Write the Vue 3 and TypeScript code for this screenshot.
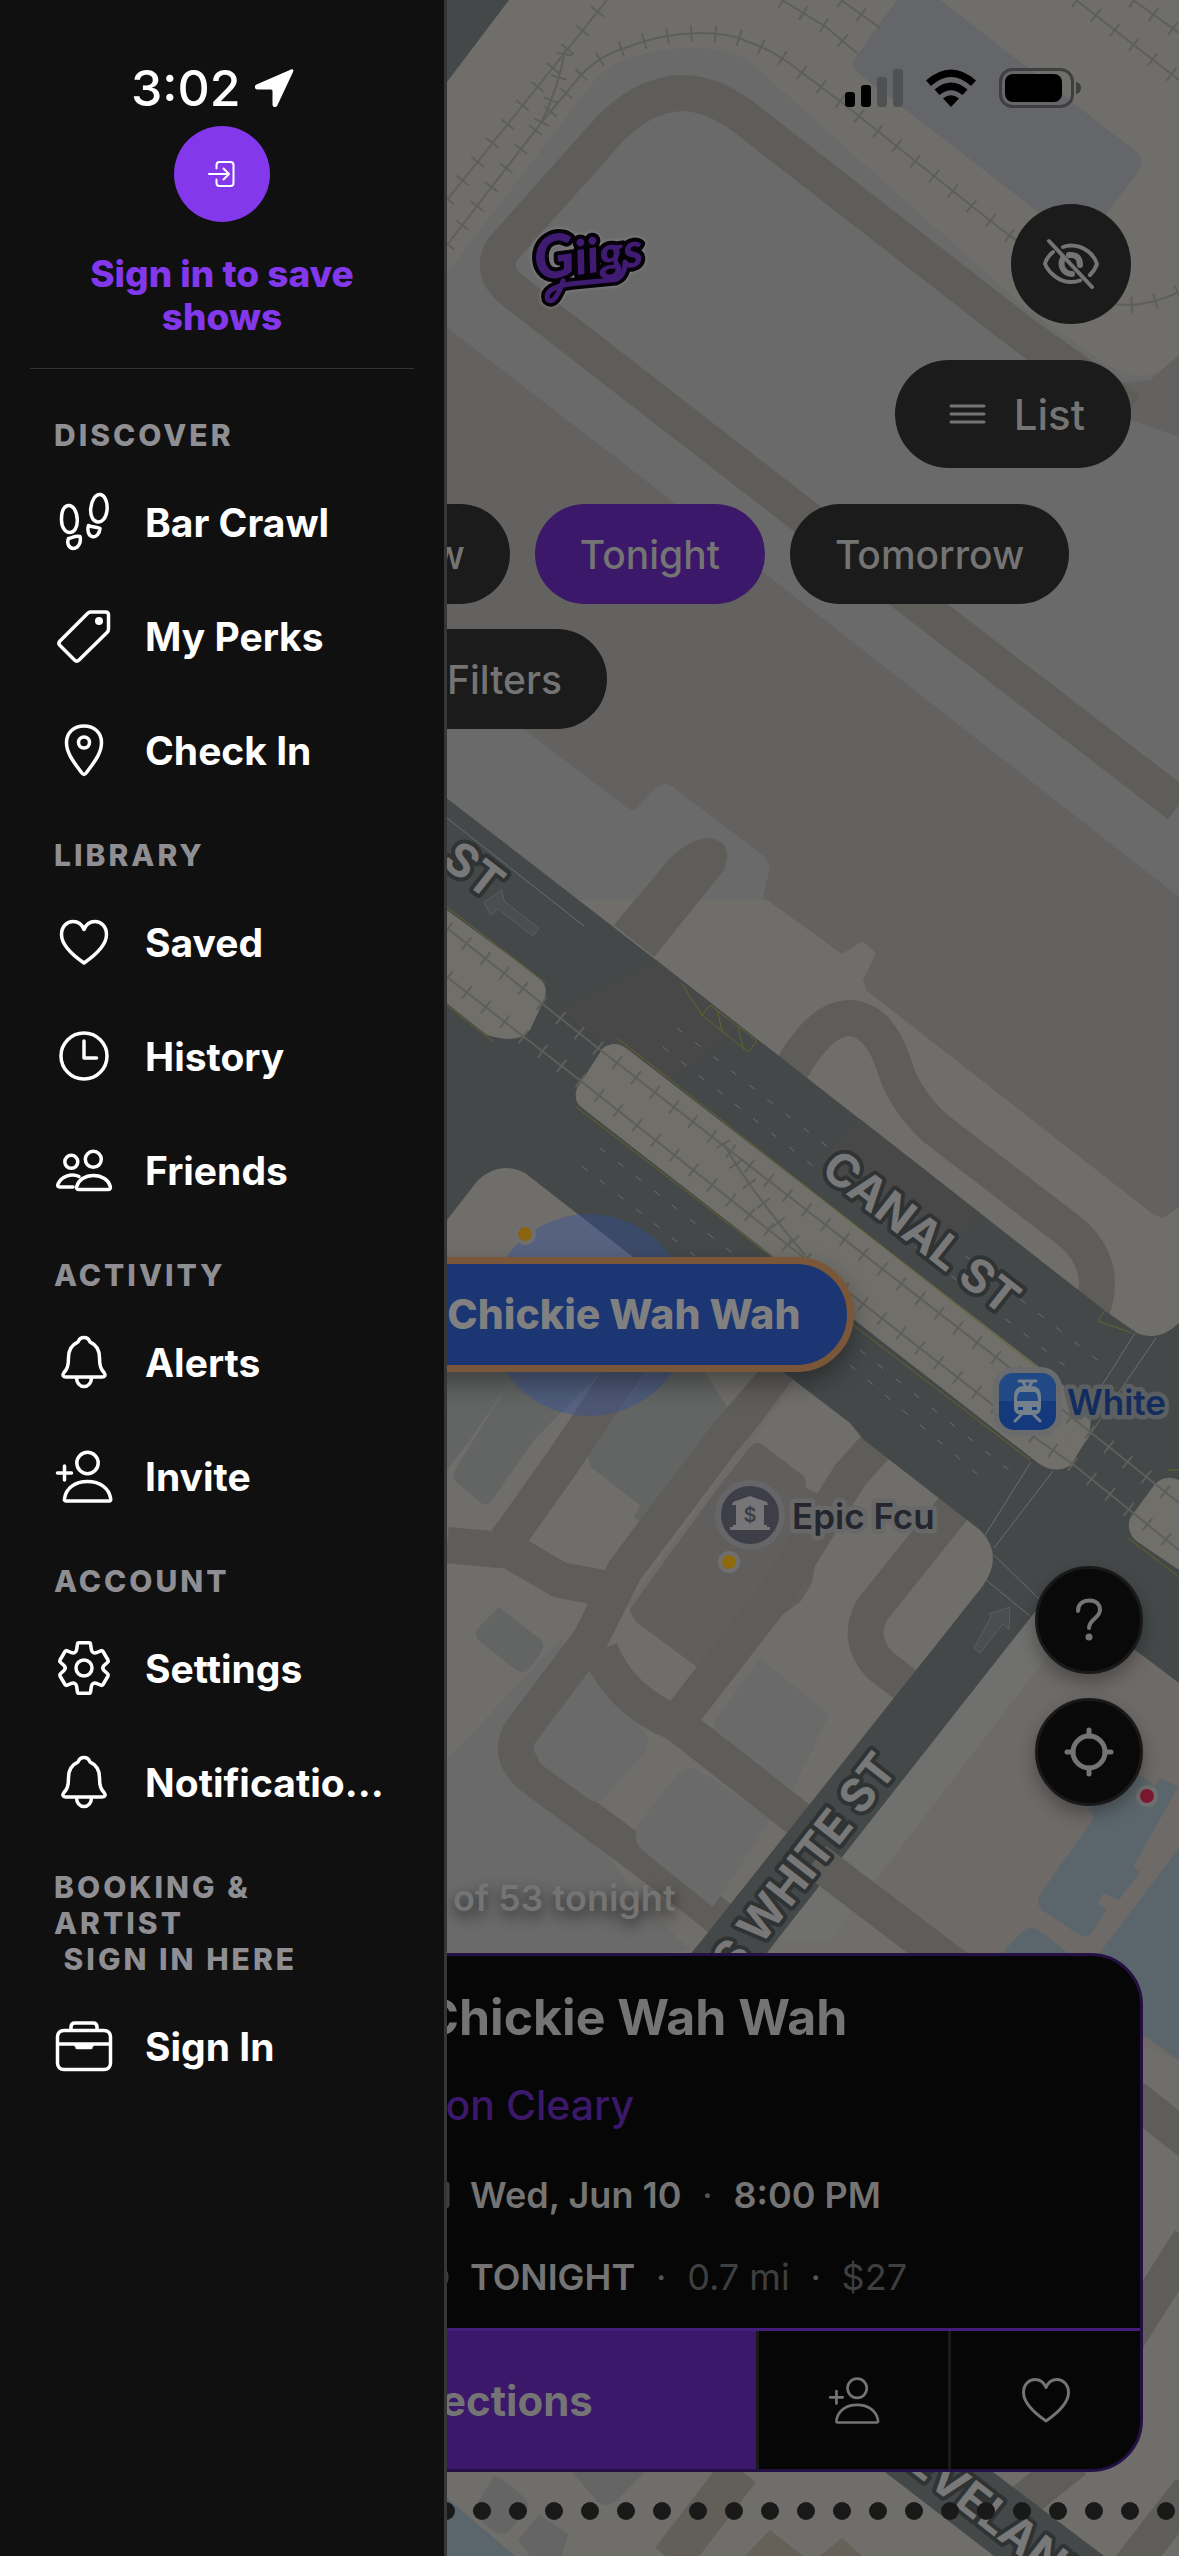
<script setup lang="ts">
interface Item {
  label: string
  icon: string
}
interface Section {
  title: string[]
  items: Item[]
}

const circle = (cx: number, cy: number, r: number): string =>
  `M${cx - r} ${cy}a${r} ${r} 0 1 0 ${2 * r} 0a${r} ${r} 0 1 0 ${-2 * r} 0z`

const bell =
  'M30 5.5c-3.5 0-5 2-5.800 4.300C17 13 14.500 18 14.500 25.500c0 9-1.500 11.500-4.500 15-2 2.500-1 4.500 1.500 4.500h37c2.500 0 3.500-2 1.500-4.500-3-3.500-4.500-6-4.500-15 0-7.500-2.500-12.500-9.700-15.700C35 7.500 33.500 5.500 30 5.500zM22.500 45.500c0 5.500 3.500 9 7.500 9s7.500-3.500 7.500-9'
const heart =
  'M30 51C17 42 7.500 33 7.500 22.500 7.500 14.500 13 9.500 19 9.500c5 0 9 3 11 8 2-5 6-8 11-8 6 0 11.500 5 11.500 13C52.500 33 43 42 30 51z'
const invite =
  circle(33.5, 17, 10.7) +
  'M12 55h43c1.500 0 2-1 1.700-2.500C55 42 46 35.500 33.500 35.500S12 42 10.500 52.500C10.200 54 10.500 55 12 55zM3.500 27h14M10.500 20v14'

const icons: Record<string, string> = {
  steps:
    'M14 13.500c5-1 9 6 9.300 14.500.2 8-3.300 12.500-7.500 12.500S7.600 36 7.500 28c-.1-7.500 2-13.500 6.500-14.500zM46.500 2.500c-5-1-9 6-9.800 14-.7 8 2.800 13 7 13.500s8.300-3.500 9.300-11.500c.9-8-2-15-6.500-16zM14.500 46.500c4-.5 6-3 11.500-2 1.500 6-2 12-6.500 12s-7-5-5-10zM34.500 33.500c3.500 2 8 1 11.500 3-.5 5-3.500 8.500-7 8.200-4.500-.4-6-6.200-4.500-11.200z',
  tag: 'M37 6h14.500c2 0 3 1 3 3v14c0 1.500-.5 2.500-1.500 3.500L25 54c-1.500 1.500-3 1.500-4.500 0L6 39.500C4.500 38 4.500 36.500 6 35L34 7c1-.8 2-1 3-1z',
  pin: 'M30 54.500c-1.500 0-2.500-2-4-4C18 40 12.500 32 12.500 22.500 12.500 12.500 20 6 30 6s17.500 6.500 17.500 16.500C47.500 32 42 40 34 50.500c-1.500 2-2.500 4-4 4z' + circle(30, 22.5, 5.5),
  heart,
  clock: circle(30, 30, 23) + 'M30 15v17h12.500',
  friends:
    circle(39.3, 19.3, 8) +
    circle(17.3, 21.8, 6.5) +
    'M25 49.500h29c2 0 2.800-1.200 2.300-3C54.500 40 48 35.500 39.500 35.500S24.500 40 22.700 46.500c-.5 1.800.3 3 2.300 3zM25 36.500C17 32.500 7 37 4 44c-.8 1.800 0 3 1.500 3H19',
  bell,
  invite,
  gear:
    'M25 4.700h10c1 0 1.500.5 1.600 1.500l.7 5c.4 3.300 2.700 4.300 5.500 3.300l4-1.700c1-.4 1.600-.2 2.200.7l5 8.500c.5 1 .4 1.500-.4 2.200L50 27.500c-1.700 1.700-1.700 3.300 0 5l3.600 3.300c.8.7.9 1.200.4 2.200l-5 8.500c-.6.9-1.200 1.100-2.200.7l-4-1.700c-2.800-1-5.100 0-5.500 3.300l-.7 5c-.1 1-.6 1.500-1.600 1.500H25c-1 0-1.500-.5-1.600-1.500l-.7-5c-.4-3.300-2.700-4.300-5.500-3.300l-4 1.700c-1 .4-1.600.2-2.200-.7l-5-8.500c-.5-1-.4-1.500.4-2.200l3.600-3.300c1.700-1.700 1.700-3.300 0-5l-3.600-3.300c-.8-.7-.9-1.200-.4-2.200l5-8.500c.6-.9 1.200-1.100 2.200-.7l4 1.700c2.800 1 5.100 0 5.500-3.300l.7-5c.1-1 .6-1.500 1.600-1.500z' +
    circle(30, 30, 8),
  briefcase:
    'M10 14.500h40c4 0 6.500 2.500 6.500 6.500v26c0 4-2.500 6.500-6.500 6.500H10c-4 0-6.500-2.500-6.500-6.500V21c0-4 2.500-6.500 6.500-6.500zM17 14v-3c0-2.500 1.500-4 4-4h18c2.500 0 4 1.500 4 4v3M3.500 28h53M22 29.500h16M23 31.500h14'
}

const sections: Section[] = [
  {
    title: ['Discover'],
    items: [
      { label: 'Bar Crawl', icon: 'steps' },
      { label: 'My Perks', icon: 'tag' },
      { label: 'Check In', icon: 'pin' }
    ]
  },
  {
    title: ['Library'],
    items: [
      { label: 'Saved', icon: 'heart' },
      { label: 'History', icon: 'clock' },
      { label: 'Friends', icon: 'friends' }
    ]
  },
  {
    title: ['Activity'],
    items: [
      { label: 'Alerts', icon: 'bell' },
      { label: 'Invite', icon: 'invite' }
    ]
  },
  {
    title: ['Account'],
    items: [
      { label: 'Settings', icon: 'gear' },
      { label: 'Notifications', icon: 'bell' }
    ]
  },
  {
    title: ['Booking & Artist', '\u00a0Sign in here'],
    items: [{ label: 'Sign In', icon: 'briefcase' }]
  }
]

const rails: string[] = [
  'M447 245L541 123L581 75Q600 55 628 47Q660 34 698 33Q730 33 746 41Q768 48 789 63L845 105L998 227L1034 253L1080 290Q1100 305 1130 305Q1155 304 1179 292',
  'M447 200L607 0',
  'M541 123Q558 90 565 50',
  'M782 0L826 27L857 53',
  'M841 0L880 28',
  'M1076 0L1179 80',
  'M1133 0L1179 33',
  'M447 928L603 1052L1010 1368L1104 1443L1179 1503',
  'M447 977L577 1078L803 1257L1034 1437L1074 1465L1179 1550',
  'M723 1143Q750 1190 805 1255'
]

const lanes: string[] = [
  'M1179 805L757 480L512 290Q490 272 502 250L600 140Q640 92 686 93Q715 95 745 118L1024 335L1130 410',
  'M791 1070Q820 1018 850 1018Q880 1020 895 1068Q905 1100 935 1128L1072 1233Q1108 1265 1092 1310',
  'M645 1340L564 1460L500 1550L447 1545',
  'M500 1545L560 1580L614 1590',
  'M800 1350L723 1440L625 1570L590 1640L520 1733Q508 1755 530 1775L676 1883L740 1935',
  'M600 1650Q620 1700 676 1723L800 1820',
  'M676 1723L779 1590L850 1475L900 1420',
  'M960 1500L872 1610Q856 1640 880 1665L925 1700',
  'M815 1860L960 1970',
  'M1190 2240L1120 2350',
  'M1075 2460L1000 2520',
  'M1190 2490L1120 2580'
]

const dotCount = 33
</script>

<template>
  <div class="screen">
    <svg class="map" viewBox="0 0 1179 2556" preserveAspectRatio="xMidYMin slice" aria-hidden="true">
      <rect width="1179" height="2556" fill="#6f6e6b" />
      <!-- upper block -->
      <path d="M440 0H509L447 82L440 90z" fill="#444848" />
      <path d="M447 273L595 80Q615 60 640 55Q690 42 732 53Q750 60 770 80L1024 307L1100 360Q1150 395 1179 353V900H440V280z" fill="#6a6a6a" />
      <path d="M440 322L671 500L1179 897V1207L1163 1218L1154 1215L866 990L863 980L876 953L862 941L842 954L763 897L770 867L765 857L673 787L665 783L657 787L634 811L626 807L525 730L440 665z" fill="#646260" />
      <path d="M1100 385L1150 380L1179 355V437L1131 420z" fill="#636260" />
      <path d="M897 0H940L1138 153Q1144 162 1138 172L1109 210L1088 238Q1081 244 1072 238L857 72Q850 66 855 58z" fill="#64666a" />
      <!-- lower left block -->
      <g fill="#6a6a6a">
        <path d="M447 1760L560 1640L600 1670L640 1720L560 1790L640 1900L690 1950L600 1960H447z" />
        <path d="M760 1658L829 1715L791 1793L722 1742Q712 1734 716 1720z" />
      </g>
      <g fill="#626564">
        <path d="M447 1365H608L534 1440L492 1500Q486 1508 480 1502L456 1482Q451 1476 456 1468L511 1380L470 1440L447 1470z" />
        <path d="M652 1365H700L727 1407L709 1440L643 1523L634 1517L640 1505L592 1468Q586 1462 590 1452z" />
        <path d="M499 1607L541 1640Q546 1646 540 1654L528 1670Q522 1675 515 1669L478 1640Q474 1634 478 1628z" />
      </g>
      <path d="M760 1443L805 1477L806 1488L826 1497L812 1583L800 1602L704 1672L640 1625Q625 1612 632 1600L748 1449Q755 1441 760 1443z" fill="#615f5d" />
      <g fill="none" stroke="#5f5d5a" stroke-width="36" stroke-linejoin="round">
        <path v-for="d in lanes" :key="d" :d="d" />
      </g>
      <path d="M591 1695Q600 1695 643 1730Q652 1740 645 1752L604 1798Q598 1804 590 1800L542 1765Q534 1756 540 1746L580 1700Q586 1694 591 1695z" fill="#6a6a6a" />
      <path d="M690 1768Q700 1768 770 1820L713 1907L642 1850Q632 1840 638 1825L676 1776Q682 1768 690 1768z" fill="#6a6a6a" />
      <path d="M629 1607L750 1440L795 1380" fill="none" stroke="#6c6b69" stroke-width="4" />
      <path d="M614 925L671 857Q692 838 709 838Q735 842 724 870L654 957z" fill="#5f5d5a" />
      <!-- Canal and White streets -->
      <path d="M440 793L656 960L1104 1310L1137 1333Q1158 1343 1179 1323V1683L1135 1650L1070 1600Q1050 1590 1035 1612L777 1940L700 2040H620L702 1940L982 1587Q1005 1555 980 1530L864 1440L850 1423L633 1257L525 1173Q500 1160 478 1180L440 1229z" fill="#444848" />
      <path d="M656 960L740 1026L660 1090L560 1010zM860 1119L980 1213L940 1260L820 1160z" fill="#484849" />
      <g fill="#706f6a">
        <path d="M440 905L515 960L541 980Q549 988 544 1000L530 1030Q518 1045 487 1035L440 998z" />
        <path d="M603 1048Q614 1040 626 1048L1043 1370L1080 1398Q1096 1410 1088 1437L1071 1465Q1055 1475 1038 1463L581 1107Q573 1100 577 1088z" />
        <path d="M1179 1480Q1165 1474 1155 1484L1130 1518Q1126 1530 1135 1540L1179 1570z" />
      </g>
      <g fill="none" stroke="#65642a" stroke-width="1">
        <path d="M440 902L546 983M617 1038L1040 1370M440 1000L494 1042M575 1106L772 1257M853 1325L1030 1460M1179 1470L1168 1470M1128 1538L1179 1577M682 984L702 1015L748 1052L757 1041L710 1005L702 1015M718 1012L722 1032M738 1028L744 1050M1105 1310L1098 1321L1132 1333" />
      </g>
      <g fill="none" stroke="#6a6d6d" stroke-width="1">
        <path d="M677 1028L1110 1370M663 1047L1070 1370M600 1148L760 1275M582 1166L700 1260M860 1350L1015 1475M850 1365L990 1485" stroke-dasharray="7 16" />
        <path d="M447 818L584 926M1135 1333L1065 1444M1156 1338L1085 1442M1031 1462L982 1540M1053 1471L994 1548M994 1555L1040 1600M986 1580L1030 1616" />
      </g>
      <g fill="none" stroke="#5e5e5c" stroke-width="2">
        <path v-for="d in rails" :key="d" :d="d" />
      </g>
      <g fill="none" stroke="#5e5e5c" stroke-width="16" stroke-dasharray="2 22">
        <path v-for="d in rails" :key="d" :d="d" />
      </g>
      <g fill="#4a4e4e" stroke="#5a5e5e">
        <path d="M484 902L502 890L504 901L539 928L533 936L498 909L491 915z" />
        <path d="M974 1648L991 1617L989 1614L1010 1607L1009 1630L1003 1624L980 1653z" />
      </g>
      <!-- lower right block -->
      <path d="M1035 1612Q1060 1595 1100 1625L1179 1685V2060L960 1970L830 1900z" fill="#6d6a68" />
      <path d="M1035 1612L777 1940L830 1940L1060 1640z" fill="#70706e" />
      <g fill="#5b666c">
        <path d="M1137 1773L1155 1786L1161 1778L1178 1787L1133 1867L1140 1872L1119 1900L1104 1893L1097 1903L1107 1910L1092 1932Q1086 1940 1078 1934L1042 1910Q1035 1903 1041 1893L1095 1817L1088 1810z" />
        <path d="M1179 1848L1098 1955L1142 2034L1179 2060z" />
        <path d="M1002 1953L1024 1930Q1030 1925 1038 1930L1068 1953z" />
        <path d="M447 2498L515 2556H447z" />
      </g>
      <path d="M815 1860L960 1970M1130 2095L1200 2150" stroke="#5f5d5a" stroke-width="36" />
      <!-- below the card -->
      <g fill="#656565">
        <path d="M494 2476Q500 2476 527 2500Q530 2508 524 2514L508 2532Q500 2536 492 2530L472 2512z" />
        <path d="M539 2514L568 2534L562 2556H530L518 2541z" />
        <path d="M572 2472H645L615 2502Q607 2508 598 2502z" />
      </g>
      <path d="M740 2470L671 2560" stroke="#625f59" stroke-width="40" />
      <path d="M770 2530L803 2556H745zM842 2538L862 2556H820z" fill="#656058" />
      <path d="M885 2472H993L1104 2556H994z" fill="#444848" />
      <g class="road" paint-order="stroke">
        <text transform="translate(440 864) rotate(38)">ST</text>
        <text transform="translate(819 1173) rotate(38)">CANAL ST</text>
        <text transform="translate(735 1979) rotate(-52)">S WHITE ST</text>
        <text transform="translate(904 2466) rotate(38)">EVELAND</text>
      </g>
      <circle cx="589" cy="1315" r="101" fill="#2f4ea0" fill-opacity=".38" />
      <!-- places -->
      <g stroke="#706f6f" stroke-width="4">
        <circle cx="525" cy="1234" r="9" fill="#8a6410" />
        <circle cx="729" cy="1562" r="9" fill="#8f6a0c" />
        <circle cx="1147" cy="1796" r="9" fill="#7c1830" />
        <circle cx="750" cy="1515" r="32" fill="#3d3e47" stroke="#666668" stroke-width="6" />
        <rect x="996" y="1370" width="63" height="63" rx="18" fill="#14397c" stroke="#696b6c" stroke-width="6" />
      </g>
      <path d="M999 1387a14 14 0 0 1 14-14h29a14 14 0 0 1 14 14v14h-57z" fill="#27508a" opacity=".7" />
      <path d="M730 1530H770V1527H767V1525H764V1505H768L767 1502L750 1496L733 1502L732 1505H736V1525H733V1527H730z" fill="#767678" />
      <text class="coin" x="750" y="1522" text-anchor="middle">$</text>
      <g fill="none" stroke="#74808c" stroke-width="3" stroke-linecap="round">
        <path d="M1019 1381H1036M1023 1382L1026 1387M1032 1382L1029 1387M1021 1415L1015 1421M1034 1415L1040 1421" />
      </g>
      <path fill-rule="evenodd" d="M1024 1386h7q10 0 10 11v10q0 8-8 8h-11q-8 0-8-8v-10q0-11 10-11zm-4 6q-3 2-3 9h21q0-7-3-9zm-2 15v3h5v-3zm14 0v3h5v-3z" fill="#74808c" />
      <g class="place" paint-order="stroke">
        <text x="1067" y="1415" class="transit">White</text>
        <text x="792" y="1529">Epic Fcu</text>
      </g>
    </svg>

    <div class="marker">Chickie Wah Wah</div>

    <main class="app">
      <header class="top">
        <svg class="logo" viewBox="0 0 110 90" role="img" aria-label="Giigs">
          <g stroke-linejoin="round" stroke-linecap="round" transform="rotate(-8 55 45)">
            <path d="M26 58Q14 82 8 74Q6 62 34 62L78 64Q88 62 90 48" fill="none" stroke="#050307" stroke-width="12" />
            <text x="0" y="54" class="logo-text" paint-order="stroke"><tspan class="initial">G</tspan>iigs</text>
            <path d="M26 58Q14 82 8 74Q6 62 34 62L78 64Q88 62 90 48" fill="none" stroke="#3f1b72" stroke-width="5" />
          </g>
        </svg>
        <button class="eye" aria-label="Hide overlay">
          <svg viewBox="0 0 60 60" width="60" height="60">
            <path d="M22 13q4-1.500 8-1.500c13 0 23 9 26 18.500q-2 6-7 11M12 18Q5 24 4 30c4 9 14 18 26 18q5 0 9-1.500M8 7l43 46" />
            <path class="pupil" d="M22 24q-3 6 0 11 3 5 9 5M28 21q11-1 11 10" />
          </svg>
        </button>
      </header>
      <button class="list">
        <svg viewBox="0 0 37 22" width="37" height="22"><path d="M2 3h33M2 11h33M2 19h33" /></svg>
        List
      </button>
      <div class="filters">
        <button class="chip">Now</button>
        <button class="chip on">Tonight</button>
        <button class="chip">Tomorrow</button>
        <button class="chip wide">Filters</button>
      </div>

      <div class="fabs">
        <button class="fab" aria-label="Help">
          <svg viewBox="0 0 54 54" width="54" height="54"><path d="M16 18c0-7 5-10.500 11.500-10.500S38 11 38 17c0 8-11 9-11 18" /><circle cx="27" cy="44" r="3.500" class="solid" /></svg>
        </button>
        <button class="fab" aria-label="My location">
          <svg viewBox="0 0 54 54" width="54" height="54" class="bold"><circle cx="27" cy="27" r="16" /><path d="M27 5v6M27 43v6M5 27h6M43 27h6" /></svg>
        </button>
      </div>
      <p class="count">of 53 tonight</p>

      <article class="card">
        <div class="info">
          <h2>Chickie Wah Wah</h2>
          <p class="artist">Jon Cleary</p>
          <p class="meta">
            <svg viewBox="0 0 30 34" width="28" height="34"><path d="M5 4h20q3 0 3 3v20q0 3-3 3H5q-3 0-3-3V7q0-3 3-3zM2 11h26" /></svg>
            <b>Wed, Jun 10</b><i>·</i><b>8:00 PM</b>
          </p>
          <p class="meta">
            <svg viewBox="0 0 30 34" width="28" height="34"><circle cx="15" cy="17" r="12" /><path d="M15 9v9h6" /></svg>
            <b>TONIGHT</b><i>·</i><span>0.7 mi</span><i>·</i><span>$27</span>
          </p>
        </div>
        <div class="actions">
          <button class="go">Directions</button>
          <button class="act" aria-label="Invite a friend"><svg viewBox="0 0 60 60" width="54" height="54"><path :d="icons.invite" /></svg></button>
          <button class="act" aria-label="Save"><svg viewBox="0 0 60 60" width="60" height="60"><path :d="icons.heart" /></svg></button>
        </div>
      </article>
      <div class="dots"><span v-for="n in dotCount" :key="n"></span></div>
    </main>

    <aside class="drawer">
      <a class="signin" href="#signin">
        <span class="avatar">
          <svg viewBox="0 0 30 30" width="30" height="30"><path d="M9.500 9.500V6q0-3 3-3h11q3 0 3 3v18q0 3-3 3h-11q-3 0-3-3v-3.500M2 15h20M16.500 9.500L22 15l-5.500 5.500" /></svg>
        </span>
        Sign in to save shows
      </a>
      <nav>
        <section v-for="s in sections" :key="s.title[0]">
          <h3><span v-for="t in s.title" :key="t">{{ t }}</span></h3>
          <a v-for="i in s.items" :key="i.label" class="item" :href="'#' + i.icon">
            <svg viewBox="0 0 60 60" width="60" height="60">
              <path :d="icons[i.icon]" />
              <circle v-if="i.icon === 'tag'" cx="45" cy="15" r="4" class="solid" />
            </svg>
            <span>{{ i.label }}</span>
          </a>
        </section>
      </nav>
    </aside>

    <div class="status">
      <div class="clock">
        <time>3:02</time>
        <svg viewBox="0 0 40 40" width="40" height="40"><path d="M37 1.500L2.500 16.500C0 17.700.5 21.500 3.500 21.500H17q1.500 0 1.500 1.500v13.500c0 3 3.500 3.500 4.800 1L39 4C40 2 39 .7 37 1.500z" fill="#fff" /></svg>
      </div>
      <div class="signals">
        <svg viewBox="0 0 58 38" width="58" height="38"><rect y="23" width="10" height="15" rx="3" /><rect x="16" y="16" width="10" height="22" rx="3" /><g fill="#505153"><rect x="32" y="8" width="10" height="30" rx="3" /><rect x="48" width="10" height="38" rx="3" /></g></svg>
        <svg viewBox="0 0 52 38" width="52" height="38"><path d="M26 38l-8-8.500q8-6.500 16 0zM14.500 26l-5-5.500q16.500-14 33 0L37.500 26q-11.500-9.500-23 0zM6 17L1 11.500Q26-10.500 51 11.500L46 17Q26-1 6 17z" /></svg>
        <svg viewBox="0 0 82 40" width="82" height="40"><rect x="1.500" y="1.500" width="72" height="37" rx="12" fill="none" stroke="#3f3f40" stroke-width="3" /><rect x="6" y="6" width="57" height="28" rx="8" /><path d="M77 14q5 1 5 6t-5 6z" fill="#3f3f40" /></svg>
      </div>
    </div>
  </div>
</template>

<style>
body {
  margin: 0;
}
</style>

<style scoped>
.screen {
  position: relative;
  min-height: 100vh;
  overflow: hidden;
  font-family: Inter, "Liberation Sans", sans-serif;
  color: #747474;
  background: #6f6e6b;
}
.screen * {
  box-sizing: border-box;
}
button {
  font: inherit;
  color: inherit;
  border: 0;
  padding: 0;
  cursor: pointer;
}
svg {
  flex: none;
  display: block;
}
h2,
h3,
p {
  margin: 0;
}
.map {
  position: absolute;
  inset: 0;
  width: 100%;
  height: 100%;
}
.road text {
  font-size: 46px;
  font-weight: 700;
  fill: #787878;
  stroke: #303334;
  stroke-width: 8px;
  stroke-linejoin: round;
}
.place text {
  font-size: 35px;
  font-weight: 600;
  fill: #23252f;
  stroke: #686868;
  stroke-width: 9px;
  stroke-linejoin: round;
}
.place .transit {
  fill: #122c5f;
  stroke: #5c5f60;
}
.coin {
  font-size: 20px;
  font-weight: 600;
  fill: #3d3e47;
}
.marker {
  position: absolute;
  top: 1257px;
  left: 50%;
  width: 528px;
  height: 115px;
  margin-left: -264px;
  padding-right: 46px;
  border: 7px solid #7a5738;
  border-radius: 58px;
  background: #1b3672;
  color: #808080;
  font-size: 41px;
  font-weight: 800;
  line-height: 101px;
  text-align: right;
  box-shadow: 0 12px 24px rgba(0, 0, 0, 0.35);
}
.app {
  position: relative;
  min-height: 100vh;
  display: flex;
  flex-direction: column;
  padding: 204px 0 36px;
}
.top {
  display: grid;
  grid-template-columns: 1fr auto 1fr;
  align-items: center;
  padding: 0 48px;
}
.logo {
  grid-column: 2;
  width: 110px;
  height: 90px;
  overflow: visible;
  filter: drop-shadow(0 0 2px #8a8a8a);
}
.logo-text {
  font-family: Lato, sans-serif;
  font-size: 48px;
  font-weight: 900;
  font-style: italic;
  fill: #3f1b72;
  stroke: #050307;
  stroke-width: 8px;
}
.initial {
  font-size: 60px;
}
.eye {
  justify-self: end;
  display: grid;
  place-items: center;
  width: 120px;
  height: 120px;
  border-radius: 60px;
  background: #1b1b1b;
}
.eye path,
.list path,
.fab path,
.fab circle,
.act path,
.meta path,
.meta circle {
  fill: none;
  stroke: #747474;
  stroke-width: 3;
  stroke-linecap: round;
  stroke-linejoin: round;
}
.eye path,
.fab path {
  stroke-width: 4;
}
.eye .pupil {
  stroke-width: 6;
}
.list {
  align-self: flex-end;
  display: flex;
  align-items: center;
  gap: 28px;
  height: 108px;
  margin: 36px 48px 0 0;
  padding: 0 46px 0 54px;
  border-radius: 54px;
  background: #1b1b1b;
  font-size: 42px;
  font-weight: 500;
}
.filters {
  display: flex;
  flex-wrap: wrap;
  gap: 25px;
  padding: 36px 0 0 335px;
}
.chip {
  height: 100px;
  padding: 0 45px;
  border-radius: 50px;
  background: #1b1b1b;
  font-size: 39px;
  font-weight: 500;
}
.chip.on {
  background: #3b1869;
}
.chip.wide {
  padding-left: 112px;
}
.fabs {
  display: flex;
  flex-direction: column;
  align-items: flex-end;
  gap: 24px;
  margin-top: auto;
  padding-right: 36px;
}
.fab {
  display: grid;
  place-items: center;
  width: 108px;
  height: 108px;
  border: 3px solid #191919;
  border-radius: 54px;
  background: #090909;
  box-shadow: 0 8px 18px rgba(0, 0, 0, 0.3);
}
.fab .bold * {
  stroke-width: 5;
}
.fab .solid {
  fill: #747474;
  stroke: none;
}
.count {
  padding: 70px 0 33px 453px;
  font-size: 36px;
  line-height: 44px;
  font-weight: 600;
  text-shadow: 0 6px 14px rgba(0, 0, 0, 0.6);
}
.card {
  margin: 0 36px;
  border: 3px solid #251045;
  border-radius: 52px;
  overflow: hidden;
  background: #060606;
}
.info {
  padding: 31px 36px 29px 383px;
}
h2 {
  font-size: 50px;
  line-height: 60px;
  font-weight: 700;
}
.artist {
  margin-top: 34px;
  color: #3b1869;
  font-size: 41px;
  line-height: 48px;
  font-weight: 500;
}
.meta {
  display: flex;
  align-items: center;
  margin-top: 38px;
  color: #3f3f3f;
  font-size: 36px;
  line-height: 44px;
}
.artist + .meta {
  margin-top: 44px;
}
.meta svg {
  margin-right: 20px;
}
.meta path,
.meta circle {
  stroke: #3f3f3f;
}
.meta b {
  color: #747474;
  font-weight: 600;
}
.meta i {
  width: 52px;
  color: #555;
  font-style: normal;
  text-align: center;
}
.actions {
  display: flex;
  height: 141px;
  border-top: 3px solid #451c7c;
}
.go {
  flex: 1;
  padding-left: 181px;
  background: #3b1869;
  font-size: 42px;
  font-weight: 700;
}
.act {
  display: grid;
  place-items: center;
  width: 192px;
  border-left: 3px solid #1a1a1a;
  background: none;
}
.dots {
  display: flex;
  gap: 18px;
  margin-top: 30px;
  padding-left: 5px;
  overflow: hidden;
}
.dots span {
  flex: none;
  width: 18px;
  height: 18px;
  border-radius: 9px;
  background: #191919;
}
.drawer {
  position: absolute;
  top: 0;
  bottom: 0;
  left: 0;
  width: 447px;
  padding: 126px 30px 0;
  border-right: 3px solid #363636;
  background: #101010;
  color: #fff;
}
.signin {
  display: flex;
  flex-direction: column;
  align-items: center;
  gap: 30px;
  padding: 0 36px 30px;
  border-bottom: 1px solid #333;
  color: #8338ec;
  font-size: 37px;
  line-height: 43px;
  font-weight: 800;
  text-align: center;
  text-decoration: none;
}
.avatar {
  display: grid;
  place-items: center;
  width: 96px;
  height: 96px;
  border-radius: 48px;
  background: #8338ec;
}
.avatar path {
  fill: none;
  stroke: #fff;
  stroke-width: 2;
  stroke-linecap: round;
  stroke-linejoin: round;
}
nav {
  display: flex;
  flex-direction: column;
  gap: 30px;
  padding: 48px 24px 0;
}
h3 {
  margin-bottom: 12px;
  padding-right: 36px;
  color: #8e8e93;
  font-size: 30px;
  line-height: 36px;
  font-weight: 800;
  letter-spacing: 3px;
  text-transform: uppercase;
}
h3 span {
  display: block;
}
.item {
  display: flex;
  align-items: center;
  gap: 31px;
  height: 114px;
  padding-right: 6px;
  color: #fff;
  font-size: 39px;
  font-weight: 700;
  text-decoration: none;
}
.item span {
  flex: 1;
  overflow: hidden;
  text-overflow: ellipsis;
  white-space: nowrap;
}
.item path {
  fill: none;
  stroke: #fff;
  stroke-width: 3.5;
  stroke-linecap: round;
  stroke-linejoin: round;
}
.item .solid {
  fill: #fff;
}
.status {
  position: absolute;
  top: 0;
  left: 0;
  right: 0;
  display: flex;
  justify-content: space-between;
  padding: 58px 98px 0 131px;
}
.clock,
.signals {
  display: flex;
  align-items: center;
}
.clock {
  gap: 13px;
  height: 60px;
  color: #fff;
  font-size: 50px;
  font-weight: 500;
}
.signals {
  gap: 22px;
  height: 60px;
}
</style>
